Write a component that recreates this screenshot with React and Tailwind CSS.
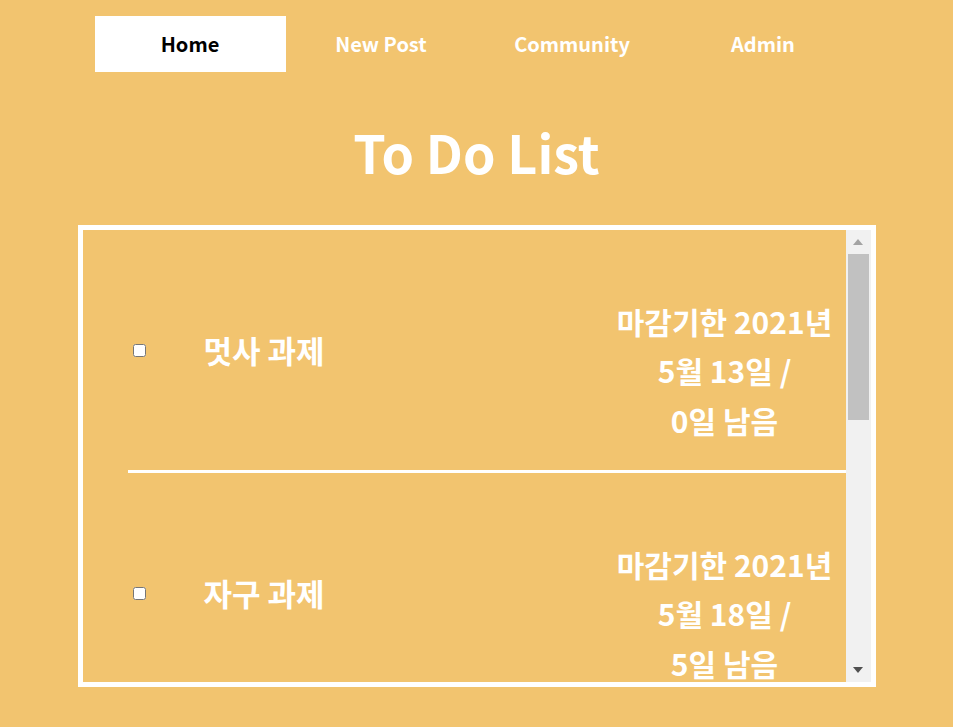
import { useState } from "react";

const menus = ["Home", "New Post", "Community", "Admin"];

const todos = [
  { id: 1, title: "멋사 과제", month: "5월 13일", left: 0 },
  { id: 2, title: "자구 과제", month: "5월 18일", left: 5 },
  { id: 3, title: "운영체제 과제", month: "5월 20일", left: 7 },
  { id: 4, title: "캡스톤 회의", month: "5월 25일", left: 12 },
];

export default function App() {
  const [done, setDone] = useState({});

  return (
    <div className="min-h-screen bg-[#f2c46f] font-['Noto_Sans_CJK_KR',sans-serif] font-bold text-white">
      <nav className="pt-4 flex justify-center">
        <ul className="flex w-[764px]">
          {menus.map((m, i) => (
            <li
              key={m}
              className={`w-[191px] h-14 flex items-center justify-center text-[20px] cursor-pointer ${
                i == 0 ? "bg-white text-black" : "text-white"
              }`}
            >
              {m}
            </li>
          ))}
        </ul>
      </nav>

      <h1 className="mt-[50px] text-center text-[52px] leading-[60px]">To Do List</h1>

      <div className="mx-auto mt-[43px] w-[798px] h-[462px] border-[5px] border-white flex">
        <div className="flex-1 h-full overflow-hidden">
          <ul className="pb-[123px]">
            {todos.map((t) => (
              <li
                key={t.id}
                className="ml-[45px] h-[243px] border-b-[3px] border-white flex items-center"
              >
                <input
                  type="checkbox"
                  className="ml-[5px] w-[13px] h-[13px]"
                  checked={!!done[t.id]}
                  onChange={() => setDone({ ...done, [t.id]: !done[t.id] })}
                />
                <span className="ml-[58px] text-[31px]">{t.title}</span>
                <div className="ml-auto mr-[3px] mt-[42px] w-[236px] text-center text-[30px] leading-[49.5px]">
                  마감기한 2021년
                  <br />
                  {t.month} /
                  <br />
                  {t.left}일 남음
                </div>
              </li>
            ))}
          </ul>
        </div>
        {/* scrollbar */}
        <div className="w-[25px] h-full bg-[#f1f1f1] flex flex-col">
          <div className="h-[24px] flex items-center justify-center">
            <div className="w-0 h-0 border-x-[5px] border-x-transparent border-b-[6px] border-b-[#a3a3a3]"></div>
          </div>
          <div className="flex-1 px-[2px]">
            <div className="h-[166px] bg-[#c1c1c1]"></div>
          </div>
          <div className="h-[24px] flex items-center justify-center">
            <div className="w-0 h-0 border-x-[5px] border-x-transparent border-t-[6px] border-t-[#505050]"></div>
          </div>
        </div>
      </div>
    </div>
  );
}
